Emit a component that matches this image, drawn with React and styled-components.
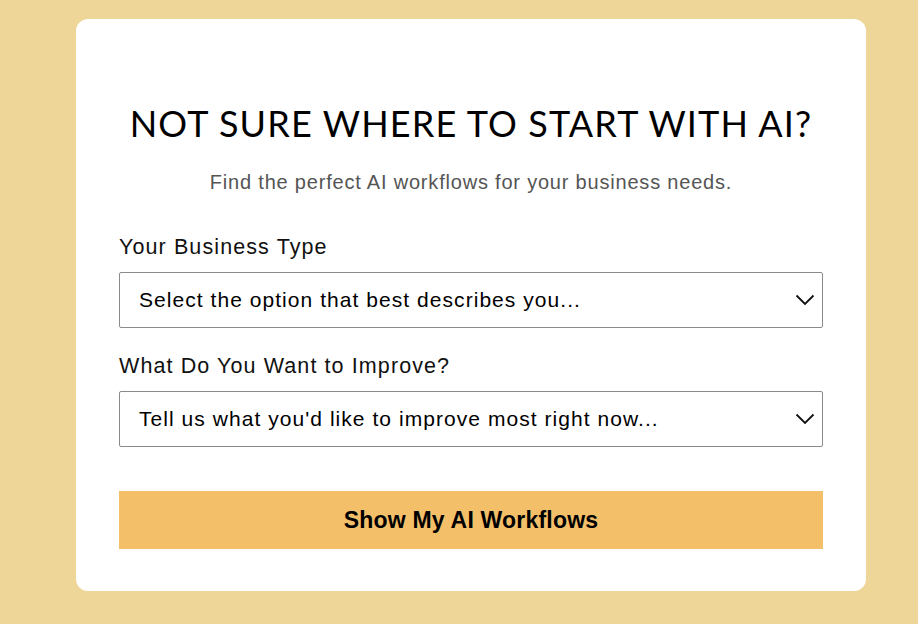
import React from "react";
import styled, { createGlobalStyle } from "styled-components";

const Global = createGlobalStyle`
  html, body { margin: 0; padding: 0; background: #EED598; }
  body { font-family: "Liberation Sans", Arial, sans-serif; }
`;

const Page = styled.div`
  min-height: 624px;
  padding: 19px 52px 0 76px;
  box-sizing: border-box;
`;

const Card = styled.div`
  width: 790px;
  background: #fff;
  border-radius: 12px;
  box-sizing: border-box;
  padding: 82px 43px 42px;
  display: flex;
  flex-direction: column;
`;

const Title = styled.h1`
  margin: 0;
  text-align: center;
  font-family: "Lato", "Open Sans", sans-serif;
  font-weight: 400;
  font-size: 36px;
  line-height: 44px;
  color: #000;
  letter-spacing: 1.15px;
  white-space: nowrap;
`;

const Subtitle = styled.p`
  margin: 25px 0 0;
  text-align: center;
  font-size: 20px;
  line-height: 24px;
  letter-spacing: 0.8px;
  color: #555;
`;

const Field = styled.div`
  display: flex;
  flex-direction: column;
  margin-top: ${(p) => p.$top}px;
`;

const Label = styled.label`
  font-size: 21.5px;
  line-height: 26px;
  letter-spacing: 1.1px;
  color: #111;
  margin-bottom: 12px;
`;

const SelectBox = styled.div`
  height: 56px;
  box-sizing: border-box;
  border: 1px solid #8a8a8a;
  border-radius: 2px;
  display: flex;
  align-items: center;
  justify-content: space-between;
  padding: 0 7px 0 19px;
  font-size: 21px;
  letter-spacing: 1.05px;
  color: #000;
`;

const Button = styled.button`
  margin-top: 44px;
  height: 58px;
  border: none;
  background: #F4BF69;
  font-family: "Liberation Sans", Arial, sans-serif;
  font-weight: 700;
  font-size: 23px;
  letter-spacing: 0.2px;
  color: #000;
  cursor: pointer;
`;

const Chevron = () => (
  <svg width="20" height="12" viewBox="0 0 20 12" fill="none">
    <path d="M1.5 1.5L10 10L18.5 1.5" stroke="#111" strokeWidth="1.8" />
  </svg>
);

export default function App() {
  return (
    <>
      <Global />
      <Page>
        <Card>
          <Title>NOT SURE WHERE TO START WITH AI?</Title>
          <Subtitle>Find the perfect AI workflows for your business needs.</Subtitle>
          <Field $top={40}>
            <Label>Your Business Type</Label>
            <SelectBox>
              <span>Select the option that best describes you...</span>
              <Chevron />
            </SelectBox>
          </Field>
          <Field $top={25}>
            <Label>What Do You Want to Improve?</Label>
            <SelectBox>
              <span>Tell us what you'd like to improve most right now...</span>
              <Chevron />
            </SelectBox>
          </Field>
          <Button>Show My AI Workflows</Button>
        </Card>
      </Page>
    </>
  );
}
